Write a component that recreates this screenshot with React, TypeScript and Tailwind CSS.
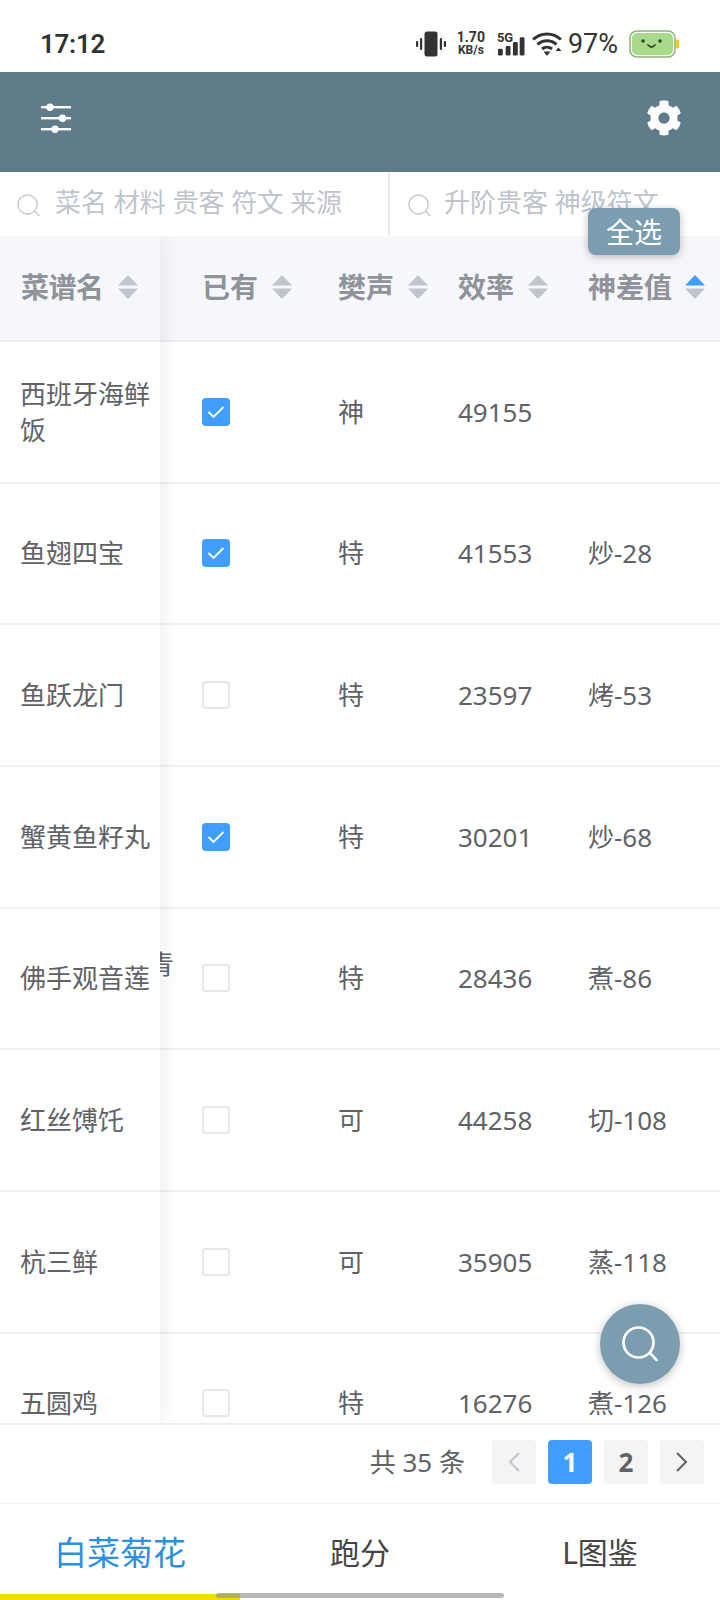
import { FaCog } from "react-icons/fa";

const rows: { name: React.ReactNode; checked: boolean; level: string; eff: string; diff: string }[] = [
  { name: "西班牙海鲜饭", checked: true, level: "神", eff: "49155", diff: "" },
  { name: "鱼翅四宝", checked: true, level: "特", eff: "41553", diff: "炒-28" },
  { name: "鱼跃龙门", checked: false, level: "特", eff: "23597", diff: "烤-53" },
  { name: "蟹黄鱼籽丸", checked: true, level: "特", eff: "30201", diff: "炒-68" },
  { name: "佛手观音莲", checked: false, level: "特", eff: "28436", diff: "煮-86" },
  { name: "红丝馎饦", checked: false, level: "可", eff: "44258", diff: "切-108" },
  { name: "杭三鲜", checked: false, level: "可", eff: "35905", diff: "蒸-118" },
  { name: "五圆鸡", checked: false, level: "特", eff: "16276", diff: "煮-126" },
];

function Caret({ active = false }: { active?: boolean }) {
  return (
    <svg width="20" height="24" viewBox="0 0 20 24" className="shrink-0">
      <path d="M10 0 L20 10.5 H0 Z" fill={active ? "#409eff" : "#c0c4cc"} />
      <path d="M10 24 L20 13.5 H0 Z" fill="#c0c4cc" />
    </svg>
  );
}

function SearchIcon({ size, stroke, sw }: { size: number; stroke: string; sw: number }) {
  return (
    <svg width={size} height={size} viewBox="0 0 24 24" fill="none" className="shrink-0">
      <circle cx="11" cy="11" r="10" stroke={stroke} strokeWidth={sw} />
      <path d="M19.2 18.6 L23 22.6" stroke={stroke} strokeWidth={sw} strokeLinecap="round" />
    </svg>
  );
}

function Checkbox({ checked }: { checked: boolean }) {
  return checked ? (
    <div className="w-[28px] h-[28px] rounded-[4px] bg-[#409eff] flex items-center justify-center">
      <svg width="20" height="16" viewBox="0 0 20 16" fill="none">
        <path d="M2.5 8 L7.5 13 L17.5 3" stroke="#fff" strokeWidth="1.8" />
      </svg>
    </div>
  ) : (
    <div className="w-[28px] h-[28px] rounded-[4px] bg-white border-2 border-[#e6e7ea]" />
  );
}

function StatusIcons() {
  return (
    <div className="flex items-center">
      <svg width="30" height="26" viewBox="0 0 30 26" fill="#333" className="mr-[10px]">
        <rect x="8.5" y="0.5" width="13" height="25" rx="2.5" />
        <rect x="4" y="7" width="2.2" height="12" rx="1" />
        <rect x="0" y="10" width="2.2" height="6" rx="1" />
        <rect x="23.8" y="7" width="2.2" height="12" rx="1" />
        <rect x="27.8" y="10" width="2.2" height="6" rx="1" />
      </svg>
      <div className="flex flex-col items-center w-[30px] text-[#333] font-bold font-['Roboto',sans-serif] mr-[11px]">
        <span className="text-[14px] leading-[14px]">1.70</span>
        <span className="text-[12px] leading-[13px]">KB/s</span>
      </div>
      <div className="relative w-[28px] h-[26px] mr-[7px]">
        <span className="absolute left-0 top-[1px] text-[#333] text-[13px] leading-[12px] font-bold font-['Roboto',sans-serif]">5G</span>
        <svg width="28" height="26" viewBox="0 0 29 26" fill="#333">
          <rect x="1" y="18" width="5" height="7" rx="1.5" />
          <rect x="9" y="15" width="5" height="10" rx="1.5" />
          <rect x="16.5" y="11" width="5" height="14" rx="1.5" />
          <rect x="23.5" y="6" width="5" height="19" rx="1.5" />
        </svg>
      </div>
      <svg width="30" height="26" viewBox="0 0 30 26" fill="none" stroke="#333" strokeWidth="3" className="mr-[6px]">
        <path d="M1 8.5 C9 1 21 1 29 8.5" />
        <path d="M5.5 13.5 C11 8.5 19 8.5 24.5 13.5" />
        <path d="M10 18 C13 15.5 17 15.5 20 18" />
        <path d="M11.5 20.5 H18.5 L15 25 Z" fill="#333" stroke="none" />
        <path d="M23.5 20 L26.5 16.5 L29.5 20 Z" fill="#333" stroke="none" />
      </svg>
      <span className="text-[27px] leading-[32px] text-[#333] font-['Roboto',sans-serif] mr-[11px]">97%</span>
      <svg width="50" height="28" viewBox="0 0 50 28" fill="none">
        <rect x="1" y="1" width="45" height="26" rx="7" fill="#fff" stroke="#8db07a" strokeWidth="1.5" />
        <rect x="3" y="3" width="41" height="22" rx="5" fill="#a9d98a" />
        <circle cx="14" cy="11" r="1.8" fill="#2c4a20" />
        <circle cx="31" cy="11" r="1.8" fill="#2c4a20" />
        <path d="M19 15 Q22.5 19 26 15" stroke="#2c4a20" strokeWidth="1.8" strokeLinecap="round" />
        <rect x="47" y="9.5" width="3" height="9" rx="1" fill="#f0c832" />
      </svg>
    </div>
  );
}

export default function App() {
  return (
    <div className="relative w-[720px] h-[1600px] overflow-hidden bg-white flex flex-col font-['Noto_Sans','Noto_Sans_CJK_SC',sans-serif] text-[#606266]">
      {/* Status bar */}
      <div className="h-[72px] shrink-0 flex items-center justify-between pl-[40px] pr-[41px] pt-[15px]">
        <span className="text-[26px] leading-[32px] font-semibold text-[#333] font-['Roboto',sans-serif] tracking-[-0.3px]">17:12</span>
        <StatusIcons />
      </div>

      {/* Header */}
      <div className="h-[100px] shrink-0 bg-[#607b8a] flex items-center justify-between pl-[41px] pr-[38px] pb-[8px]">
        <svg width="30" height="30" viewBox="0 0 30 30" fill="#fff">
          <rect x="0" y="3" width="30" height="2.4" />
          <rect x="0" y="14" width="30" height="2.4" />
          <rect x="0" y="25" width="30" height="2.4" />
          <circle cx="9" cy="4.2" r="3.7" />
          <circle cx="21.5" cy="15.2" r="3.7" />
          <circle cx="14" cy="26.2" r="3.7" />
        </svg>
        <FaCog size={36} color="#fff" />
      </div>

      {/* Search row */}
      <div className="h-[64px] shrink-0 flex items-center">
        <div className="w-[388px] h-full flex items-center pl-[17px] gap-[15px] pt-[2px]">
          <SearchIcon size={23} stroke="#c8cbd1" sw={1.6} />
          <span className="text-[26px] leading-[36px] text-[#c0c4cc] whitespace-nowrap -mt-[6px]">菜名 材料 贵客 符文 来源</span>
        </div>
        <div className="w-[2px] h-[62px] bg-[#e8e8e8]" />
        <div className="flex-1 h-full flex items-center pl-[18px] gap-[13px] pt-[2px]">
          <SearchIcon size={23} stroke="#c8cbd1" sw={1.6} />
          <span className="text-[26px] leading-[36px] text-[#c0c4cc] whitespace-nowrap -mt-[6px]">升阶贵客 神级符文</span>
        </div>
      </div>

      {/* Table */}
      <div className="h-[1187px] shrink-0 overflow-hidden flex">
        <div className="relative z-10 w-[160px] shrink-0 bg-white shadow-[0_0_20px_rgba(0,0,0,0.09)]">
          <div className="h-[106px] bg-[#f5f7fa] border-b-2 border-[#ebeef5] flex items-center pl-[21px] gap-[14px] pb-[2px]">
            <span className="text-[28px] leading-[36px] font-bold text-[#909399] tracking-[-0.5px]">菜谱名</span>
            <Caret />
          </div>
          {rows.map((r) => (
            <div key={r.eff} className="h-[141.67px] border-b-2 border-[#f0f1f4] flex items-center pl-[20px] pr-[10px]">
              <span className="text-[26px] leading-[36px]">{r.name}</span>
            </div>
          ))}
        </div>
        <div className="relative flex-1 min-w-0">
          <div className="h-[106px] bg-[#f5f7fa] border-b-2 border-[#ebeef5] flex items-center pb-[2px]">
            <div className="w-[158px] pl-[42px] flex items-center gap-[14px]">
              <span className="text-[28px] leading-[36px] font-bold text-[#909399]">已有</span>
              <Caret />
            </div>
            <div className="w-[119px] pl-[20px] flex items-center gap-[14px]">
              <span className="text-[28px] leading-[36px] font-bold text-[#909399] whitespace-nowrap">樊声</span>
              <Caret />
            </div>
            <div className="w-[131px] pl-[21px] flex items-center gap-[14px]">
              <span className="text-[28px] leading-[36px] font-bold text-[#909399] whitespace-nowrap">效率</span>
              <Caret />
            </div>
            <div className="flex-1 pl-[20px] flex items-center gap-[13px]">
              <span className="text-[28px] leading-[36px] font-bold text-[#909399] whitespace-nowrap">神差值</span>
              <Caret active />
            </div>
          </div>
          {rows.map((r, i) => (
            <div key={r.eff} className="relative h-[141.67px] border-b-2 border-[#f0f1f4] flex items-center text-[26px] leading-[36px]">
              {i === 4 && (
                <span className="absolute left-[-12px] top-[37px] text-[26px] leading-[36px]">青</span>
              )}
              <div className="w-[158px] pl-[42px]"><Checkbox checked={r.checked} /></div>
              <div className="w-[119px] pl-[20px]">{r.level}</div>
              <div className="w-[131px] pl-[21px]">{r.eff}</div>
              <div className="flex-1 pl-[20px]">{r.diff}</div>
            </div>
          ))}
        </div>
      </div>

      {/* Pagination */}
      <div className="h-[80px] shrink-0 border-t-2 border-[#ebeef5] flex items-center justify-end pr-[16px] gap-[12px] pb-[4px]">
        <span className="text-[26px] leading-[36px] mr-[15px]">共 35 条</span>
        <div className="w-[44px] h-[44px] rounded-[4px] bg-[#f4f4f5] flex items-center justify-center">
          <svg width="14" height="22" viewBox="0 0 14 22" fill="none"><path d="M12 2 L3 11 L12 20" stroke="#c0c4cc" strokeWidth="2" /></svg>
        </div>
        <div className="w-[44px] h-[44px] rounded-[4px] bg-[#409eff] text-white text-[26px] leading-[36px] font-bold flex items-center justify-center">1</div>
        <div className="w-[44px] h-[44px] rounded-[4px] bg-[#f4f4f5] text-[#606266] text-[26px] leading-[36px] font-bold flex items-center justify-center">2</div>
        <div className="w-[44px] h-[44px] rounded-[4px] bg-[#f4f4f5] flex items-center justify-center">
          <svg width="14" height="22" viewBox="0 0 14 22" fill="none"><path d="M2 2 L11 11 L2 20" stroke="#606266" strokeWidth="2" /></svg>
        </div>
      </div>

      {/* Tabs */}
      <div className="flex-1 border-t border-[#f2f3f5] flex flex-col">
        <div className="flex-1 grid grid-cols-3 items-center pt-[8px] text-[30px] leading-[40px] text-[#444] text-center">
          <span className="text-[33px] text-[#2d8fe0]">白菜菊花</span>
          <span>跑分</span>
          <span>L图鉴</span>
        </div>
        <div className="h-[6px] w-[240px] bg-[#eedd00]" />
      </div>

      {/* Overlays */}
      <div className="absolute left-[216px] top-[1593px] w-[288px] h-[5px] rounded-full bg-[#999]/70" />
      <div className="absolute left-[588px] top-[208px] z-20 w-[92px] h-[47px] rounded-[8px] bg-[#7a9db0] shadow-[0_2px_8px_rgba(0,0,0,0.25)] flex items-center justify-center text-white text-[28px] leading-[36px]">全选</div>
      <div className="absolute left-[600px] top-[1304px] z-20 w-[80px] h-[80px] rounded-full bg-[#7a9db0] shadow-[0_2px_10px_rgba(0,0,0,0.25)] flex items-center justify-center">
        <SearchIcon size={36} stroke="#fff" sw={1.8} />
      </div>
    </div>
  );
}
